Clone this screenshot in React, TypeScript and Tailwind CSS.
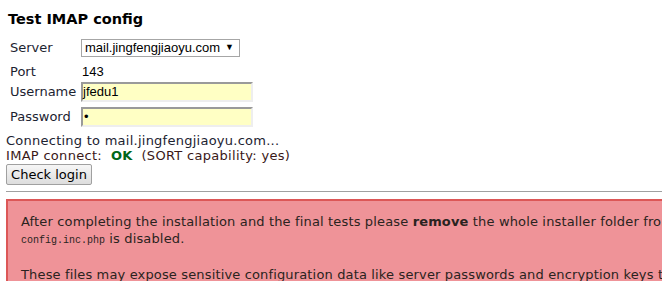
const verdana = { fontFamily: '"DejaVu Sans", Verdana, sans-serif' };

export default function App() {
  return (
    <div
      className="w-[662px] h-[281px] overflow-hidden bg-white text-[13px] text-[#1c2331]"
      style={verdana}
    >
      <div className="pl-[6px] pt-[10px]">
        <h3 className="pl-[2px] text-[14.5px] font-bold leading-[19px] text-black">Test IMAP config</h3>

        <div className="mt-[8px] flex flex-col">
          <div className="flex h-[22px] items-center">
            <div className="w-[75px] pl-[4px]">Server</div>
            <div className="flex h-[18px] w-[159px] items-center justify-between border border-[#a6a6a6] bg-white pl-[3px] pr-[5px] font-['Liberation_Sans',Arial,sans-serif] text-black">
              <span>mail.jingfengjiaoyu.com</span>
              <span className="text-[9px]">▼</span>
            </div>
          </div>
          <div className="flex h-[20px] items-center pt-[5px]">
            <div className="w-[75px] pl-[4px]">Port</div>
            <div className="pl-[1px] font-['Liberation_Sans',Arial,sans-serif] text-black">143</div>
          </div>
          <div className="flex h-[25px] items-center">
            <div className="w-[75px] pl-[4px]">Username</div>
            <div className="flex h-[20px] w-[172px] items-center border-2 border-t-[#9a9a9a] border-l-[#9a9a9a] border-r-[#eeeeee] border-b-[#eeeeee] bg-[#ffffc4] font-['Liberation_Sans',Arial,sans-serif] text-black">
              jfedu1
            </div>
          </div>
          <div className="flex h-[25px] items-center">
            <div className="w-[75px] pl-[4px]">Password</div>
            <div className="flex h-[20px] w-[172px] items-center border-2 border-t-[#9a9a9a] border-l-[#9a9a9a] border-r-[#eeeeee] border-b-[#eeeeee] bg-[#ffffc4] pl-[1px] font-['Liberation_Sans',Arial,sans-serif] text-black">
              •
            </div>
          </div>
        </div>

        <div className="mt-[5px] leading-[14px] tracking-[0.25px]">Connecting to mail.jingfengjiaoyu.com...</div>
        <div className="leading-[15px] tracking-[0.3px] text-[#3a1818]">
          IMAP connect:&nbsp; <span className="font-bold text-[#00661a]">OK</span>&nbsp; (SORT capability: yes)
        </div>
        <button className="mt-[1px] h-[21px] w-[86px] rounded-[2px] border border-[#a0a0a0] bg-gradient-to-b from-[#f6f6f6] to-[#dddddd] text-[13px] text-black">
          Check login
        </button>

        <hr className="mt-[6px] border-t border-[#a0a0a0]" />

        <div className="mt-[7px] w-[720px] border-2 border-[#dc5757] bg-[#ef9398] pl-[13px] pt-[12px] text-[13px] tracking-[0.15px] text-[#2a2320]">
          <p className="whitespace-nowrap leading-[17px]">
            After completing the installation and the final tests please <b>remove</b> the whole installer folder from the document root
          </p>
          <p className="whitespace-nowrap leading-[17px]">
            <code className="font-['Liberation_Mono',monospace] text-[10px] tracking-normal">config.inc.php</code> is disabled.
          </p>
          <p className="mt-[17px] whitespace-nowrap leading-[17px]">
            These files may expose sensitive configuration data like server passwords and encryption keys to the public.
          </p>
        </div>
      </div>
    </div>
  );
}
